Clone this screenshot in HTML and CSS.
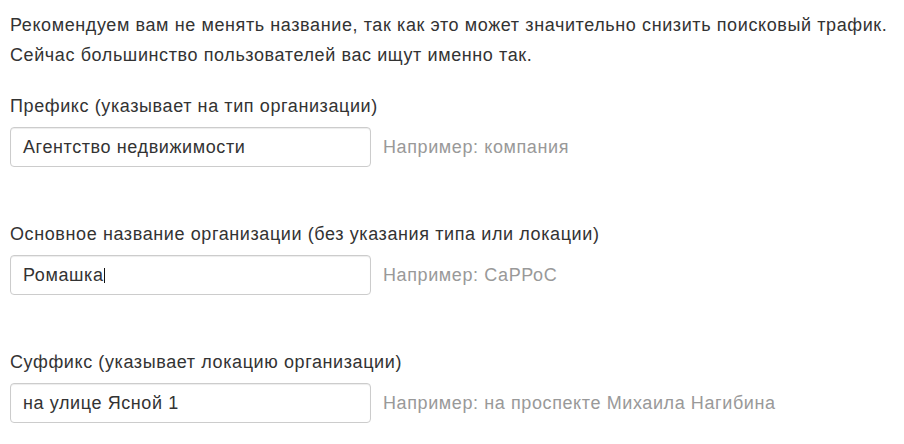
FILE: index.html
```html
<!DOCTYPE html>
<html lang="ru">
<head>
<meta charset="utf-8">
<title>Название организации</title>
<link rel="stylesheet" href="styles.css">
</head>
<body>
<div class="page">
  <p class="intro">Рекомендуем вам не менять название, так как это может значительно снизить поисковый трафик.<br>Сейчас большинство пользователей вас ищут именно так.</p>

  <div class="group">
    <div class="label">Префикс (указывает на тип организации)</div>
    <div class="row">
      <div class="field">Агентство недвижимости</div>
      <div class="hint">Например: компания</div>
    </div>
  </div>

  <div class="group">
    <div class="label">Основное название организации (без указания типа или локации)</div>
    <div class="row">
      <div class="field">Ромашка<span class="caret"></span></div>
      <div class="hint">Например: СаРРоС</div>
    </div>
  </div>

  <div class="group">
    <div class="label">Суффикс (указывает локацию организации)</div>
    <div class="row">
      <div class="field">на улице Ясной 1</div>
      <div class="hint">Например: на проспекте Михаила Нагибина</div>
    </div>
  </div>
</div>
</body>
</html>
```

FILE: styles.css
```css
html, body {
  margin: 0;
  padding: 0;
  background: #ffffff;
}

.page {
  padding: 10px 10px 0 10px;
  font-family: "Liberation Sans", Arial, sans-serif;
  font-size: 18px;
  letter-spacing: 0.6px;
  line-height: 30px;
  color: #333333;
}

.intro {
  margin: 0 0 21px 0;
  white-space: nowrap;
}

.group {
  display: flex;
  flex-direction: column;
  gap: 6px;
  margin-bottom: 52px;
}

.group:last-child {
  margin-bottom: 0;
}

.label {
  line-height: 30px;
  white-space: nowrap;
}

.row {
  display: flex;
  align-items: center;
  gap: 12px;
}

.field {
  box-sizing: border-box;
  width: 361px;
  height: 40px;
  padding: 0 12px;
  border: 1px solid #cccccc;
  border-radius: 4px;
  box-shadow: inset 0 1px 1px rgba(0, 0, 0, 0.075);
  display: flex;
  align-items: center;
  line-height: 20px;
  color: #333333;
  white-space: nowrap;
}

.caret {
  display: inline-block;
  width: 1px;
  height: 15px;
  margin-left: 0;
  background: #111111;
}

.hint {
  color: #999999;
  white-space: nowrap;
}
```
